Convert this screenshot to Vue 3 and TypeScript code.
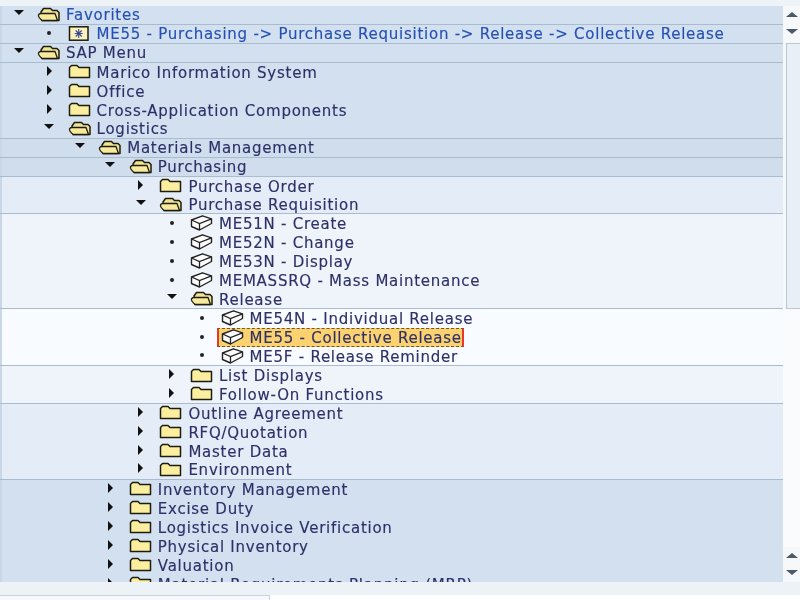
<script setup lang="ts">
type Kind = 'open' | 'closed' | 'fav' | 'tx'

interface Row {
  label: string
  level: number
  kind: Kind
  band: 'deep' | 'mid' | 'soft' | 'pale' | 'white'
  line?: boolean
  link?: boolean
  selected?: boolean
}

const rows: Row[] = [
  { label: 'Favorites', level: 0, kind: 'open', band: 'deep', line: true, link: true },
  { label: 'ME55 - Purchasing -> Purchase Requisition -> Release -> Collective Release', level: 1, kind: 'fav', band: 'deep', line: true, link: true },
  { label: 'SAP Menu', level: 0, kind: 'open', band: 'deep', line: true },
  { label: 'Marico Information System', level: 1, kind: 'closed', band: 'deep' },
  { label: 'Office', level: 1, kind: 'closed', band: 'deep' },
  { label: 'Cross-Application Components', level: 1, kind: 'closed', band: 'deep' },
  { label: 'Logistics', level: 1, kind: 'open', band: 'deep', line: true },
  { label: 'Materials Management', level: 2, kind: 'open', band: 'mid', line: true },
  { label: 'Purchasing', level: 3, kind: 'open', band: 'mid', line: true },
  { label: 'Purchase Order', level: 4, kind: 'closed', band: 'soft' },
  { label: 'Purchase Requisition', level: 4, kind: 'open', band: 'soft', line: true },
  { label: 'ME51N - Create', level: 5, kind: 'tx', band: 'pale' },
  { label: 'ME52N - Change', level: 5, kind: 'tx', band: 'pale' },
  { label: 'ME53N - Display', level: 5, kind: 'tx', band: 'pale' },
  { label: 'MEMASSRQ - Mass Maintenance', level: 5, kind: 'tx', band: 'pale' },
  { label: 'Release', level: 5, kind: 'open', band: 'pale', line: true },
  { label: 'ME54N - Individual Release', level: 6, kind: 'tx', band: 'white' },
  { label: 'ME55 - Collective Release', level: 6, kind: 'tx', band: 'white', selected: true },
  { label: 'ME5F - Release Reminder', level: 6, kind: 'tx', band: 'white', line: true },
  { label: 'List Displays', level: 5, kind: 'closed', band: 'pale' },
  { label: 'Follow-On Functions', level: 5, kind: 'closed', band: 'pale', line: true },
  { label: 'Outline Agreement', level: 4, kind: 'closed', band: 'soft' },
  { label: 'RFQ/Quotation', level: 4, kind: 'closed', band: 'soft' },
  { label: 'Master Data', level: 4, kind: 'closed', band: 'soft' },
  { label: 'Environment', level: 4, kind: 'closed', band: 'soft', line: true },
  { label: 'Inventory Management', level: 3, kind: 'closed', band: 'deep' },
  { label: 'Excise Duty', level: 3, kind: 'closed', band: 'deep' },
  { label: 'Logistics Invoice Verification', level: 3, kind: 'closed', band: 'deep' },
  { label: 'Physical Inventory', level: 3, kind: 'closed', band: 'deep' },
  { label: 'Valuation', level: 3, kind: 'closed', band: 'deep' },
  { label: 'Material Requirements Planning (MRP)', level: 3, kind: 'closed', band: 'deep' },
]

const indent = (level: number) => `${12 + level * 30.6}px`
</script>

<template>
  <div class="screen">
    <div class="main">
      <div class="tree">
        <div
          v-for="row in rows"
          :key="row.label"
          class="row"
          :class="[row.band, { line: row.line, link: row.link }]"
          :style="{ paddingLeft: indent(row.level) }"
        >
          <span class="toggle">
            <span v-if="row.kind === 'open'" class="tri down"></span>
            <span v-else-if="row.kind === 'closed'" class="tri right"></span>
            <span v-else class="dot"></span>
          </span>

          <span class="node" :class="{ selected: row.selected }">
            <svg v-if="row.kind === 'open'" class="icon" viewBox="0 0 23 15">
              <path d="M4 5 L6.5 1.5 H13.5 L15.5 3.5 H20 L22 5.5 V13.5 H5 Z" fill="#f2e392" stroke="#1c1c10" stroke-width="1.5" stroke-linejoin="round" />
              <path d="M4 6.5 H18 L20.5 13.5 H5 Q1 10 1.5 8 Q2 6.5 4 6.5 Z" fill="#f8ea9c" stroke="#1c1c10" stroke-width="1.3" stroke-linejoin="round" />
            </svg>
            <svg v-else-if="row.kind === 'closed'" class="icon" viewBox="0 0 23 15">
              <path d="M1.5 3.5 L3.5 1.5 H9 L11 3.5 H21.5 V13.5 H1.5 Z" fill="#fbee9f" stroke="#1c1c10" stroke-width="1.5" stroke-linejoin="round" />
            </svg>
            <svg v-else-if="row.kind === 'fav'" class="icon" viewBox="0 0 23 15">
              <rect x="1.5" y="0.8" width="18.5" height="13.4" fill="#fbf2c0" stroke="#1c1c10" stroke-width="1.5" />
              <path d="M10.7 3 V12 M6.7 7.5 H14.7 M7.7 4.5 L13.7 10.5 M13.7 4.5 L7.7 10.5" stroke="#3a4a8c" stroke-width="1.1" />
            </svg>
            <svg v-else class="icon tx" viewBox="0 0 23 16">
              <path d="M1.5 5 L12.5 0.8 L21.5 3.8 V8.5 L9.5 15 L1.5 11.5 Z" fill="#fdfdfd" stroke="#222" stroke-width="1.4" stroke-linejoin="round" />
              <path d="M1.5 5 L9.5 8.5 L21.5 3.8 M9.5 8.5 V15" fill="none" stroke="#222" stroke-width="1.3" />
            </svg>

            <span class="label">{{ row.label }}</span>
          </span>
        </div>
      </div>

      <div class="scrollbar">
        <span class="arrow up"></span>
        <span class="arrow dn"></span>
        <div class="thumb"></div>
        <div class="track"></div>
        <span class="arrow up"></span>
        <span class="arrow dn"></span>
      </div>
    </div>
    <div class="footer">
      <div class="tabs">
        <div class="tab"></div>
      </div>
    </div>
  </div>
</template>

<style>
html, body { margin: 0; background: #eef3f8; }
</style>

<style scoped>
.screen {
  width: 800px;
  height: 600px;
  display: flex;
  flex-direction: column;
  overflow: hidden;
  padding-top: 6px;
  box-sizing: border-box;
  background: #eef3f8;
  font-family: "DejaVu Sans", Verdana, sans-serif;
}
.main {
  display: flex;
  height: 576px;
}
.tree {
  flex: 1;
  overflow: hidden;
  background: #d3e0ef;
  filter: blur(0.4px);
}
.row {
  display: flex;
  align-items: center;
  height: 18.96px;
  box-sizing: border-box;
  font-size: 15px;
  letter-spacing: 0.75px;
  color: #2d3068;
  -webkit-text-stroke: 0.15px;
  white-space: nowrap;
  box-shadow: inset 2px 0 0 #c9d7e6;
}
.row.line { border-bottom: 1px solid #a9bccf; }
.row.link { color: #2450b4; }
.deep { background: #d3e0ef; }
.mid { background: #cfdded; }
.soft { background: #e4edf7; }
.pale { background: #eff4fb; }
.white { background: #f8fbff; }

.toggle {
  width: 13px;
  height: 18px;
  margin-right: 12px;
  flex: none;
  display: flex;
  align-items: center;
  justify-content: center;
}
.tri { width: 0; height: 0; display: block; }
.tri.down {
  border-left: 5px solid transparent;
  border-right: 5px solid transparent;
  border-top: 5px solid #111;
  margin-top: -5px;
}
.tri.right {
  border-top: 5px solid transparent;
  border-bottom: 5px solid transparent;
  border-left: 5px solid #111;
  margin-top: -3px;
}
.dot {
  width: 4px;
  height: 4px;
  background: #222;
  border-radius: 50%;
  margin-top: -2px;
}
.node {
  display: flex;
  align-items: center;
  height: 18px;
}
.node.selected {
  height: 19px;
  box-sizing: border-box;
  margin-left: -4px;
  padding-left: 2px;
  background: #fbd26f;
  border-top: 1px dashed #6d5a20;
  border-bottom: 1px dashed #6d5a20;
  border-left: 2px solid #e6392c;
  border-right: 2px solid #e6392c;
}
.icon {
  width: 23px;
  height: 15px;
  flex: none;
  margin-right: 6px;
  margin-top: -1px;
}
.icon.tx {
  height: 16px;
}
.label {
  margin-top: 1px;
}

.scrollbar {
  width: 17px;
  height: 576px;
  box-sizing: border-box;
  padding-bottom: 1px;
  display: flex;
  flex-direction: column;
  align-items: center;
  background: #f6f8fa;
}
.arrow {
  width: 0;
  height: 0;
  flex: none;
  margin: 6px 0;
  border-left: 6px solid transparent;
  border-right: 6px solid transparent;
}
.arrow.up { border-bottom: 5px solid #4a5a68; }
.arrow.dn { border-top: 5px solid #4a5a68; }
.thumb {
  width: 14px;
  height: 266px;
  margin: 3px 0 0 3px;
  box-sizing: border-box;
  border: 1px solid #b9c6d3;
  border-right: 0;
  background: #e8eff7;
  flex: none;
}
.track {
  flex: 1;
  width: 100%;
  background: #fafbfc;
}
.footer {
  flex: 1;
  display: flex;
  flex-direction: column;
  justify-content: flex-end;
  background: #edf2f7;
}
.tabs {
  height: 5px;
  background: #fff;
}
.tab {
  width: 270px;
  height: 5px;
  box-sizing: border-box;
  background: #f6f8fb;
  border-top: 1px solid #c8d2dc;
  border-right: 1px solid #c8d2dc;
}
</style>
